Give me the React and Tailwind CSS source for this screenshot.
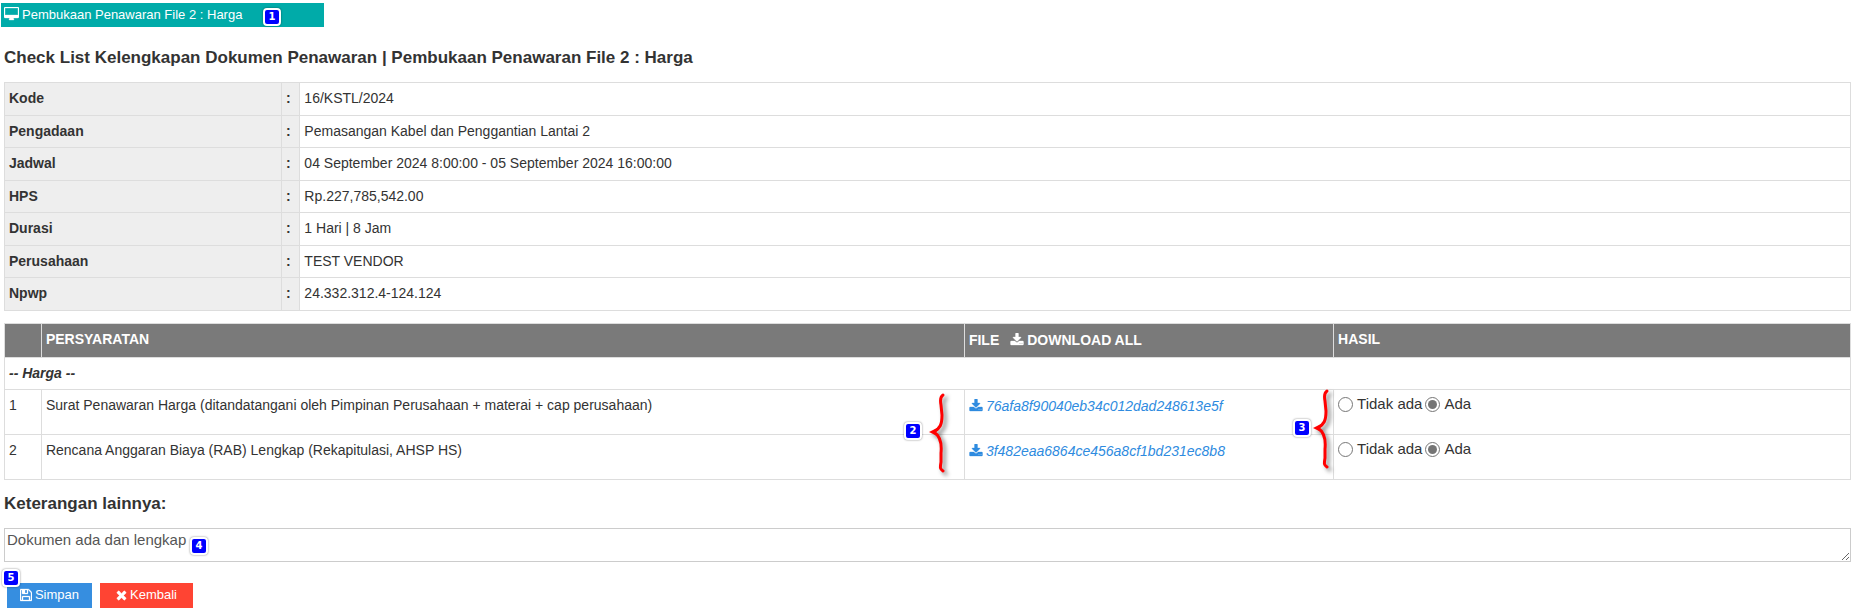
import React, { useState } from 'react';

const ICONS = {
  desktop: {
    viewBox: '-64 0 1920 1792',
    d: 'M1728 992v-832q0-13-9.5-22.5t-22.5-9.5h-1600q-13 0-22.5 9.5t-9.5 22.5v832q0 13 9.5 22.5t22.5 9.5h1600q13 0 22.5-9.5t9.5-22.5zm128-832v1088q0 66-47 113t-113 47h-544q0 37 16 77.5t32 71 16 43.5q0 26-19 45t-45 19h-512q-26 0-45-19t-19-45q0-14 16-44t32-70 16-78h-544q-66 0-113-47t-47-113v-1088q0-66 47-113t113-47h1600q66 0 113 47t47 113z'
  },
  download: {
    viewBox: '64 0 1664 1792',
    d: 'M1344 1344q0-26-19-45t-45-19-45 19-19 45 19 45 45 19 45-19 19-45zm256 0q0-26-19-45t-45-19-45 19-19 45 19 45 45 19 45-19 19-45zm128-224v320q0 40-28 68t-68 28h-1472q-40 0-68-28t-28-68v-320q0-40 28-68t68-28h465l135 136q58 56 136 56t136-56l136-136h464q40 0 68 28t28 68zm-325-569q17 41-14 70l-448 448q-18 19-45 19t-45-19l-448-448q-31-29-14-70 17-39 59-39h256v-448q0-26 19-45t45-19h256q26 0 45 19t19 45v448h256q42 0 59 39z'
  },
  save: {
    viewBox: '128 0 1536 1792',
    d: 'M512 1536h768v-384h-768v384zm896 0h128v-896q0-14-10-38.5t-20-34.5l-281-281q-10-10-34-20t-39-10v416q0 40-28 68t-68 28h-576q-40 0-68-28t-28-68v-416h-128v1280h128v-416q0-40 28-68t68-28h832q40 0 68 28t28 68v416zm-384-928v-320q0-13-9.5-22.5t-22.5-9.5h-192q-13 0-22.5 9.5t-9.5 22.5v320q0 13 9.5 22.5t22.5 9.5h192q13 0 22.5-9.5t9.5-22.5zm640 32v928q0 40-28 68t-68 28h-1344q-40 0-68-28t-28-68v-1344q0-40 28-68t68-28h928q40 0 88 20t76 48l280 280q28 28 48 76t20 88z'
  },
  times: {
    viewBox: '192 0 1408 1792',
    d: 'M1490 1322q0 40-28 68l-136 136q-28 28-68 28t-68-28l-294-294-294 294q-28 28-68 28t-68-28l-136-136q-28-28-28-68t28-68l294-294-294-294q-28-28-28-68t28-68l136-136q28-28 68-28t68 28l294 294 294-294q28-28 68-28t68 28l136 136q28 28 28 68t-28 68l-294 294 294 294q28 28 28 68z'
  }
};

const Icon = ({ name, className }) => (
  <svg viewBox={ICONS[name].viewBox} fill="currentColor" stroke="currentColor" strokeWidth="40" aria-hidden="true" className={`inline-block shrink-0 ${className}`}>
    <path d={ICONS[name].d} />
  </svg>
);

// Numbered marker that points at a step of the form
const Marker = ({ number, className }) => (
  <span
    className={`absolute z-10 flex h-[18px] w-[18px] items-center justify-center rounded border-2 border-white bg-[#0000ff] font-['DejaVu_Sans',sans-serif] text-[10px] leading-none font-bold text-white not-italic shadow-[0_0_2px_rgba(0,0,0,0.5)] ${className}`}
  >
    {number}
  </span>
);

const Brace = ({ className }) => (
  <svg viewBox="0 0 22 84" fill="none" aria-hidden="true" className={`absolute z-10 h-[84px] w-[22px] drop-shadow-[3px_3px_2px_rgba(0,0,0,0.5)] ${className}`}>
    <path d="M14 2 C11 4 11 7 12 12 L13 22 C13 32 11 35 5 39 C11 43 13 50 12 60 L12 69 C11 75 11 76 14 78" stroke="#ff0000" strokeWidth="3" strokeLinecap="round" />
    <path d="M0 39 L8 35 L7 39 L8 43 Z" fill="#ff0000" />
  </svg>
);

const details = [
  { label: 'Kode', value: '16/KSTL/2024' },
  { label: 'Pengadaan', value: 'Pemasangan Kabel dan Penggantian Lantai 2' },
  { label: 'Jadwal', value: '04 September 2024 8:00:00 - 05 September 2024 16:00:00' },
  { label: 'HPS', value: 'Rp.227,785,542.00' },
  { label: 'Durasi', value: '1 Hari | 8 Jam' },
  { label: 'Perusahaan', value: 'TEST VENDOR' },
  { label: 'Npwp', value: '24.332.312.4-124.124' }
];

const requirements = [
  { id: 1, name: 'Surat Penawaran Harga (ditandatangani oleh Pimpinan Perusahaan + materai + cap perusahaan)', file: '76afa8f90040eb34c012dad248613e5f' },
  { id: 2, name: 'Rencana Anggaran Biaya (RAB) Lengkap (Rekapitulasi, AHSP HS)', file: '3f482eaa6864ce456a8cf1bd231ec8b8' }
];

const App = () => {
  const [results, setResults] = useState({ 1: 'Ada', 2: 'Ada' });
  const [note, setNote] = useState('Dokumen ada dan lengkap');

  return (
    <div className="min-h-screen bg-white pt-[3px] font-['Liberation_Sans',Arial,sans-serif] text-sm text-[#333333]">
      {/* Page tab */}
      <div className="relative ml-px flex h-6 w-[323px] items-center gap-[3px] bg-[#00aba9] pl-[3px] text-[13px] text-white">
        <Icon name="desktop" className="mb-[2px] h-[14px] w-[15px]" />
        <span>Pembukaan Penawaran File 2 : Harga</span>
        <Marker number={1} className="top-[5px] left-[262px]" />
      </div>

      <div className="mr-[7px] ml-1">
        <h1 className="mt-[18px] mb-[11px] text-[17px] leading-[26px] font-bold">
          Check List Kelengkapan Dokumen Penawaran | Pembukaan Penawaran File 2 : Harga
        </h1>

        {/* Tender details */}
        <table className="w-full table-fixed border-collapse">
          <colgroup>
            <col className="w-[15%]" />
            <col className="w-[1%]" />
            <col />
          </colgroup>
          <tbody>
            {details.map(row => (
              <tr key={row.label} className="align-top odd:h-[33px] even:h-8">
                <th scope="row" className="border border-[#dddddd] bg-[#eeeeee] px-1 pt-[5px] text-left leading-5 font-bold">{row.label}</th>
                <td className="border border-[#dddddd] bg-[#eeeeee] px-1 pt-[5px] leading-5 font-bold">:</td>
                <td className="border border-[#dddddd] px-1 pt-[5px] leading-5">{row.value}</td>
              </tr>
            ))}
          </tbody>
        </table>

        {/* Requirement check list */}
        <table className="mt-3 w-full table-fixed border-collapse">
          <colgroup>
            <col className="w-[2%]" />
            <col className="w-[50%]" />
            <col className="w-[20%]" />
            <col />
          </colgroup>
          <thead>
            <tr className="h-[34px] bg-[#7a7a7a] text-left align-top text-white">
              <td className="border border-[#dddddd]"></td>
              <th className="border border-[#dddddd] px-1 pt-[5px] leading-5">PERSYARATAN</th>
              <th className="border border-[#dddddd] px-1 pt-[6px] leading-5">
                <span className="flex items-center">
                  FILE
                  <a href="#download-all" className="ml-[11px] flex items-center gap-[3px]">
                    <Icon name="download" className="h-[14px] w-[14px]" />
                    DOWNLOAD ALL
                  </a>
                </span>
              </th>
              <th className="border border-[#dddddd] px-1 pt-[5px] leading-5">HASIL</th>
            </tr>
          </thead>
          <tbody>
            <tr className="h-8 align-top">
              <td colSpan={4} className="border border-[#dddddd] px-1 pt-[5px] leading-5 font-bold italic">-- Harga --</td>
            </tr>
            {requirements.map((item, index) => (
              <tr key={item.id} className="h-[45px] align-top">
                <td className="border border-[#dddddd] px-1 pt-[5px] leading-5">{item.id}</td>
                <td className="relative border border-[#dddddd] px-1 pt-[5px] leading-5">
                  {item.name}
                  {index === 0 && (
                    <>
                      <Marker number={2} className="top-8 right-[42px]" />
                      <Brace className="top-[3px] right-[13px]" />
                    </>
                  )}
                </td>
                <td className="relative border border-[#dddddd] px-1 pt-[6px] leading-5">
                  <a href={`#${item.file}`} className="flex items-center gap-[3px] text-[#2e8be0] italic">
                    <Icon name="download" className="h-[14px] w-[14px]" />
                    {item.file}
                  </a>
                  {index === 0 && (
                    <>
                      <Marker number={3} className="top-[29px] right-[22px]" />
                      <Brace className="-top-px -right-[2px]" />
                    </>
                  )}
                </td>
                <td className="border border-[#dddddd] px-1 pt-1 text-[15px] leading-5">
                  <div className="flex items-center gap-[3px]">
                    {['Tidak ada', 'Ada'].map(option => (
                      <label key={option} className="flex items-center gap-1">
                        <input
                          type="radio"
                          name={`hasil-${item.id}`}
                          checked={results[item.id] === option}
                          onChange={() => setResults(prev => ({ ...prev, [item.id]: option }))}
                          className="h-[15px] w-[15px] accent-[#757575]"
                        />
                        {option}
                      </label>
                    ))}
                  </div>
                </td>
              </tr>
            ))}
          </tbody>
        </table>

        {/* Notes */}
        <label htmlFor="keterangan" className="mt-[11px] mb-[11px] block text-[17px] leading-[26px] font-bold">
          Keterangan lainnya:
        </label>
        <div className="relative">
          <textarea
            id="keterangan"
            value={note}
            onChange={(e) => setNote(e.target.value)}
            className="block h-[34px] w-full resize border border-[#cccccc] px-[2px] py-px text-[15px] leading-5 text-[#555555] focus:outline-none"
          />
          <Marker number={4} className="top-[9px] left-[186px]" />
        </div>

        {/* Actions */}
        <div className="relative mt-[21px] ml-[3px] flex gap-2 text-[13px] text-white">
          <button type="button" className="flex h-[25px] w-[85px] items-center justify-center gap-[3px] bg-[#368ee0]">
            <Icon name="save" className="mb-[2px] h-[14px] w-[12px]" />
            Simpan
          </button>
          <button type="button" className="flex h-[25px] w-[93px] items-center justify-center gap-[3px] bg-[#ff4433]">
            <Icon name="times" className="mb-[2px] h-[14px] w-[11px]" />
            Kembali
          </button>
          <Marker number={5} className="-top-[14px] -left-[5px]" />
        </div>
      </div>
    </div>
  );
};

export default App;
